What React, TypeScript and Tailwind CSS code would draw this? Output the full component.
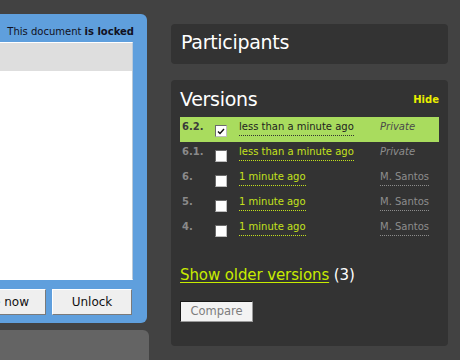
const font = { fontFamily: '"DejaVu Sans", Verdana, sans-serif' };

type Version = {
  num: string;
  when: string;
  who: string;
  isPrivate: boolean;
  selected?: boolean;
};

const versions: Version[] = [
  { num: "6.2.", when: "less than a minute ago", who: "Private", isPrivate: true, selected: true },
  { num: "6.1.", when: "less than a minute ago", who: "Private", isPrivate: true },
  { num: "6.", when: "1 minute ago", who: "M. Santos", isPrivate: false },
  { num: "5.", when: "1 minute ago", who: "M. Santos", isPrivate: false },
  { num: "4.", when: "1 minute ago", who: "M. Santos", isPrivate: false },
];

function Checkbox({ checked }: { checked?: boolean }) {
  return (
    <div className="mt-[4px] flex h-[12px] w-[12px] shrink-0 items-center justify-center border border-t-[#6b6b6b] border-l-[#6b6b6b] border-r-[#bdbdbd] border-b-[#bdbdbd] bg-white">
      {checked && (
        <svg width="8" height="7" viewBox="0 0 8 7">
          <path d="M1 3.5 L3 5.5 L7 1" fill="none" stroke="#111" strokeWidth="1.4" />
        </svg>
      )}
    </div>
  );
}

function VersionRow({ v }: { v: Version }) {
  const sel = !!v.selected;
  return (
    <div className={`flex h-[25px] items-start pl-[2px] pt-[4px] text-[10px] leading-[12px] ${sel ? "bg-[#a9dc5e]" : ""}`}>
      <span className={`w-[33px] shrink-0 font-bold ${sel ? "text-[#3a3a3a]" : "text-[#8a8a8a]"}`}>{v.num}</span>
      <Checkbox checked={sel} />
      <div className="ml-[12px] w-[141px] shrink-0">
        <span
          className={`inline-block border-b border-dotted pb-[2px] ${
            sel ? "border-[#333] text-[#1e1e1e]" : "border-[#c4e21c] text-[#c4e21c]"
          }`}
        >
          {v.when}
        </span>
      </div>
      {v.isPrivate ? (
        <span className={`italic ${sel ? "text-[#4a4a4a]" : "text-[#8d8d8d]"}`}>{v.who}</span>
      ) : (
        <span className="inline-block border-b border-dotted border-[#8d8d8d] pb-[2px] text-[#8d8d8d]">{v.who}</span>
      )}
    </div>
  );
}

function DocumentPanel() {
  return (
    <div className="w-[247px] shrink-0 pt-[14px]">
      <div className="rounded-r-[6px] bg-[#5f9fdd] pb-[8px] pr-[14px] pt-[12px]">
        <div className="-mr-[1px] mb-[4px] text-right text-[10px] leading-[12px] text-[#111122]">
          This document <span className="font-bold">is locked</span>
        </div>
        <div className="h-[238px] border border-white border-r-[#b9c9d9] bg-white">
          <div className="h-[28px] bg-[#dedede]" />
        </div>
        <div className="mt-[9px] flex justify-end gap-[6px] pr-[1px]">
          <button className="h-[26px] w-[106px] whitespace-nowrap border border-t-white border-l-white border-r-[#7a7a7a] border-b-[#7a7a7a] bg-[#efefef] text-[12px] text-[#111]">
            Update now
          </button>
          <button className="h-[26px] w-[80px] border border-t-white border-l-white border-r-[#7a7a7a] border-b-[#7a7a7a] bg-[#efefef] text-[12px] text-[#111]">
            Unlock
          </button>
        </div>
      </div>
      <div className="-mr-[2px] mt-[7px] h-[40px] rounded-tr-[6px] bg-[#646464]" />
    </div>
  );
}

export default function App() {
  return (
    <div className="h-[360px] w-[460px] overflow-hidden bg-[#424242]" style={font}>
      <div className="-ml-[100px] flex items-start gap-[24px]">
        <DocumentPanel />
        <div className="w-[277px] shrink-0 pt-[24px]">
          <div className="rounded-[4px] bg-[#333333] pb-[11px] pl-[10px] pt-[7px]">
            <h2 className="text-[19px] leading-[22px] tracking-[-0.3px] text-white">Participants</h2>
          </div>
          <div className="mt-[16px] rounded-[4px] bg-[#333333] px-[9px] pb-[24px] pt-[8px]">
            <div className="flex items-end justify-between">
              <h2 className="text-[19px] leading-[22px] tracking-[-0.3px] text-white">Versions</h2>
              <a className="mb-[4px] text-[10px] font-bold leading-[12px] text-[#e9ee00]">Hide</a>
            </div>
            <div className="mt-[7px]">
              {versions.map((v) => (
                <VersionRow key={v.num} v={v} />
              ))}
            </div>
            <div className="mt-[24px] text-[15px] leading-[18px] tracking-[-0.1px]">
              <a className="text-[#c8ec00] underline underline-offset-2">Show older versions</a>
              <span className="text-white"> (3)</span>
            </div>
            <button className="mt-[17px] h-[21px] w-[73px] border border-t-[#1a1a1a] border-l-[#1a1a1a] border-r-[#9a9a9a] border-b-[#9a9a9a] bg-[#f3f3f3] text-[11.5px] text-[#7d7d7d]">
              Compare
            </button>
          </div>
        </div>
      </div>
    </div>
  );
}
